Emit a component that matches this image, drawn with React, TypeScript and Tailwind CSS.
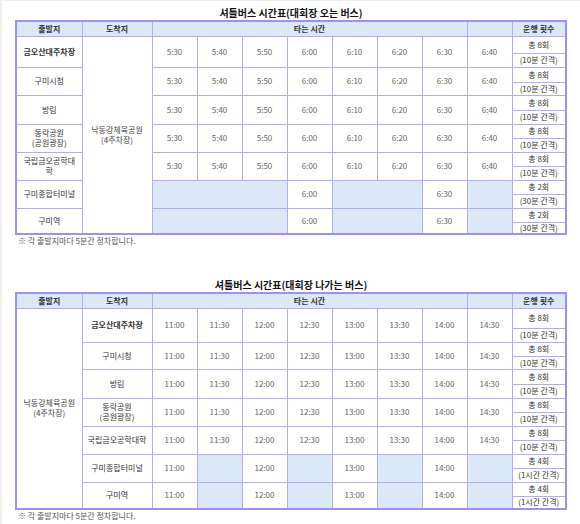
import type { ReactNode } from "react"

type Cell = string | { span: number }

type Group = {
  name: ReactNode
  bold?: boolean
  cells: Cell[]
  count: string
  interval: string
  ha: string
  hb: string
}

const line = "border border-[#b5abf3]"
const head = "border border-[#b5abf3] bg-[#dae8f8] text-[#333] font-semibold"
const blue = "border border-[#b5abf3] bg-[#dae8f8]"

const full1 = ["5:30", "5:40", "5:50", "6:00", "6:10", "6:20", "6:30", "6:40"]
const sparse1: Cell[] = [{ span: 3 }, "6:00", { span: 2 }, "6:30", { span: 1 }]

const full2 = ["11:00", "11:30", "12:00", "12:30", "13:00", "13:30", "14:00", "14:30"]
const sparse2: Cell[] = ["11:00", { span: 1 }, "12:00", { span: 1 }, "13:00", { span: 1 }, "14:00", { span: 1 }]

const twoLine = (a: string, b: string) => (
  <>
    {a}
    <br />
    {b}
  </>
)

const incoming: Group[] = [
  { name: "금오산대주차장", bold: true, cells: full1, count: "총 8회", interval: "(10분 간격)", ha: "h-[17px]", hb: "h-[14px]" },
  { name: "구미시청", cells: full1, count: "총 8회", interval: "(10분 간격)", ha: "h-[15px]", hb: "h-[13px]" },
  { name: "방림", cells: full1, count: "총 8회", interval: "(10분 간격)", ha: "h-[15px]", hb: "h-[14px]" },
  { name: twoLine("동락공원", "(공원광장)"), cells: full1, count: "총 8회", interval: "(10분 간격)", ha: "h-[14px]", hb: "h-[14px]" },
  { name: twoLine("국립금오공학대", "학"), cells: full1, count: "총 8회", interval: "(10분 간격)", ha: "h-[14px]", hb: "h-[14px]" },
  { name: "구미종합터미널", cells: sparse1, count: "총 2회", interval: "(30분 간격)", ha: "h-[14px]", hb: "h-[14px]" },
  { name: "구미역", cells: sparse1, count: "총 2회", interval: "(30분 간격)", ha: "h-[14px]", hb: "h-[12px]" },
]

const outgoing: Group[] = [
  { name: "금오산대주차장", bold: true, cells: full2, count: "총 8회", interval: "(10분 간격)", ha: "h-[20px]", hb: "h-[14px]" },
  { name: "구미시청", cells: full2, count: "총 8회", interval: "(10분 간격)", ha: "h-[14px]", hb: "h-[13px]" },
  { name: "방림", cells: full2, count: "총 8회", interval: "(10분 간격)", ha: "h-[15px]", hb: "h-[14px]" },
  { name: twoLine("동락공원", "(공원광장)"), cells: full2, count: "총 8회", interval: "(10분 간격)", ha: "h-[14px]", hb: "h-[14px]" },
  { name: "국립금오공학대학", cells: full2, count: "총 8회", interval: "(10분 간격)", ha: "h-[14px]", hb: "h-[14px]" },
  { name: "구미종합터미널", cells: sparse2, count: "총 4회", interval: "(1시간 간격)", ha: "h-[14px]", hb: "h-[14px]" },
  { name: "구미역", cells: sparse2, count: "총 4회", interval: "(1시간 간격)", ha: "h-[14px]", hb: "h-[13px]" },
]

function Destination({ span }: { span: number }) {
  return (
    <td rowSpan={span} className={`${line} bg-white text-[#444] align-middle`}>
      낙동강체육공원
      <br />
      (4주차장)
    </td>
  )
}

function Timetable({ title, groups, fixedFirst }: { title: string; groups: Group[]; fixedFirst: boolean }) {
  const span = groups.length * 2
  return (
    <section>
      <h2 className="h-[14px] text-center text-[10px] font-bold leading-[14px] text-[#111]">{title}</h2>
      <table className="w-full table-fixed border-collapse border-2 border-[#9d90f0] text-center text-[8px] leading-[10px]">
        <colgroup>
          <col className="w-[66px]" />
          <col className="w-[70px]" />
          {[0, 1, 2, 3, 4, 5, 6, 7].map((i) => (
            <col key={i} className="w-[45px]" />
          ))}
          <col className="w-[54px]" />
        </colgroup>
        <thead>
          <tr className="h-[15px]">
            <th className={head}>출발지</th>
            <th className={head}>도착지</th>
            <th colSpan={7} className={head}>타는 시간</th>
            <th className={head}></th>
            <th className={head}>운행 횟수</th>
          </tr>
        </thead>
        <tbody>
          {groups.map((g, gi) => {
            const nameCell = (
              <td rowSpan={2} className={`${line} text-[#333] ${g.bold ? "font-bold whitespace-nowrap" : "whitespace-nowrap"}`}>
                {g.name}
              </td>
            )
            return [
              <tr key={`${gi}a`} className={g.ha}>
                {fixedFirst ? (
                  <>
                    {gi === 0 && <Destination span={span} />}
                    {nameCell}
                  </>
                ) : (
                  <>
                    {nameCell}
                    {gi === 0 && <Destination span={span} />}
                  </>
                )}
                {g.cells.map((c, ci) =>
                  typeof c === "string" ? (
                    <td key={ci} rowSpan={2} className={`${line} text-[#666]`}>
                      {c}
                    </td>
                  ) : (
                    <td key={ci} rowSpan={2} colSpan={c.span} className={blue}></td>
                  ),
                )}
                <td className={`${line} text-[#333]`}>{g.count}</td>
              </tr>,
              <tr key={`${gi}b`} className={g.hb}>
                <td className={`${line} text-[#333] whitespace-nowrap`}>{g.interval}</td>
              </tr>,
            ]
          })}
        </tbody>
      </table>
      <p className="h-[12px] pl-[3px] text-[8px] leading-[12px] text-[#555]">※ 각 출발지마다 5분간 정차합니다.</p>
    </section>
  )
}

export default function App() {
  return (
    <div
      className="h-[524px] w-[580px] overflow-hidden border-l-2 border-t border-[#f1f1f1] bg-white px-[13px] pt-[5px]"
      style={{ fontFamily: '"Noto Sans CJK KR", "Noto Sans", sans-serif' }}
    >
      <Timetable title="셔틀버스 시간표(대회장 오는 버스)" groups={incoming} fixedFirst={false} />
      <div className="h-[31px]" />
      <Timetable title="셔틀버스 시간표(대회장 나가는 버스)" groups={outgoing} fixedFirst />
    </div>
  )
}
